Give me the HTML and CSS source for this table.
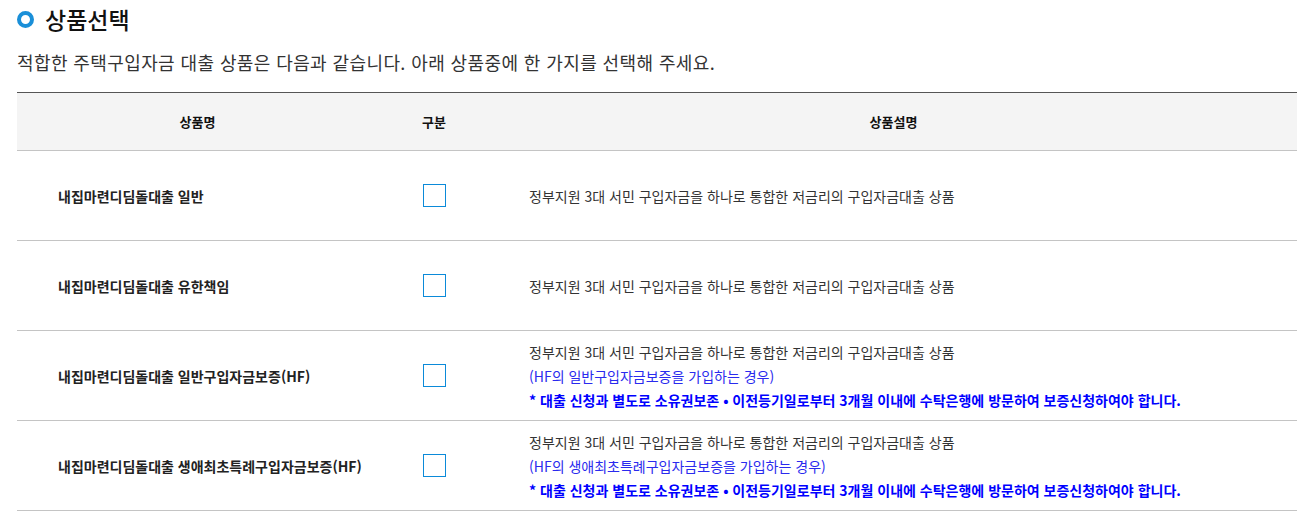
FILE: index.html
```html
<!DOCTYPE html>
<html lang="ko">
<head>
<meta charset="utf-8">
<link rel="stylesheet" href="styles.css">
</head>
<body>
<div class="page">
  <h2 class="title"><span class="dot"></span>상품선택</h2>
  <p class="lead">적합한 주택구입자금 대출 상품은 다음과 같습니다. 아래 상품중에 한 가지를 선택해 주세요.</p>
  <table class="tbl">
    <colgroup>
      <col class="c1"><col class="c2"><col class="c3">
    </colgroup>
    <thead>
      <tr><th>상품명</th><th>구분</th><th>상품설명</th></tr>
    </thead>
    <tbody>
      <tr>
        <td class="name">내집마련디딤돌대출 일반</td>
        <td class="chk"><span class="box"></span></td>
        <td class="desc">정부지원 3대 서민 구입자금을 하나로 통합한 저금리의 구입자금대출 상품</td>
      </tr>
      <tr>
        <td class="name">내집마련디딤돌대출 유한책임</td>
        <td class="chk"><span class="box"></span></td>
        <td class="desc">정부지원 3대 서민 구입자금을 하나로 통합한 저금리의 구입자금대출 상품</td>
      </tr>
      <tr>
        <td class="name">내집마련디딤돌대출 일반구입자금보증(HF)</td>
        <td class="chk"><span class="box"></span></td>
        <td class="desc">정부지원 3대 서민 구입자금을 하나로 통합한 저금리의 구입자금대출 상품<br><span class="blue">(HF의 일반구입자금보증을 가입하는 경우)</span><br><span class="note">* 대출 신청과 별도로 소유권보존 • 이전등기일로부터 3개월 이내에 수탁은행에 방문하여 보증신청하여야 합니다.</span></td>
      </tr>
      <tr>
        <td class="name">내집마련디딤돌대출 생애최초특례구입자금보증(HF)</td>
        <td class="chk"><span class="box"></span></td>
        <td class="desc">정부지원 3대 서민 구입자금을 하나로 통합한 저금리의 구입자금대출 상품<br><span class="blue">(HF의 생애최초특례구입자금보증을 가입하는 경우)</span><br><span class="note">* 대출 신청과 별도로 소유권보존 • 이전등기일로부터 3개월 이내에 수탁은행에 방문하여 보증신청하여야 합니다.</span></td>
      </tr>
    </tbody>
  </table>
</div>
</body>
</html>
```
FILE: styles.css
```css
html, body {
  margin: 0;
  padding: 0;
  background: #fff;
}
body {
  font-family: "Noto Sans CJK KR", "Noto Sans", sans-serif;
  color: #222;
}
.page {
  padding: 0 7px 0 17px;
}
.title {
  display: flex;
  align-items: center;
  margin: 0;
  padding-top: 4px;
  height: 30px;
  font-size: 23px;
  font-weight: 500;
  color: #111;
}
.dot {
  width: 9px;
  height: 9px;
  border: 4px solid #1a8fd8;
  border-radius: 50%;
  margin-right: 11px;
  flex: none;
}
.lead {
  margin: 13px 0 0 0;
  font-size: 18px;
  line-height: 30px;
  color: #333;
  letter-spacing: 0.4px;
}
.tbl {
  width: 1280px;
  margin-top: 15px;
  border-collapse: collapse;
  table-layout: fixed;
  border-top: 1px solid #555;
  font-size: 13px;
}
.c1 { width: 361px; }
.c2 { width: 112px; }
.c3 { width: 807px; }
.tbl th {
  height: 57px;
  background: #f4f4f4;
  font-weight: 700;
  color: #111;
  border-bottom: 1px solid #c4c4c4;
  text-align: center;
  padding: 0;
}
.tbl td {
  height: 89px;
  border-bottom: 1px solid #c4c4c4;
  padding: 0;
  vertical-align: middle;
}
.name {
  padding-left: 41px !important;
  font-size: 14px;
  font-weight: 700;
  color: #222;
}
.chk {
  text-align: center;
}
.box {
  display: inline-block;
  width: 21px;
  height: 21px;
  border: 1px solid #0b8ad9;
  vertical-align: middle;
}
.desc {
  padding-left: 39px !important;
  font-size: 14px;
  line-height: 24px;
  color: #333;
}
.blue {
  color: #2a2aee;
}
.note {
  color: #0000ff;
  font-weight: 700;
}
```
